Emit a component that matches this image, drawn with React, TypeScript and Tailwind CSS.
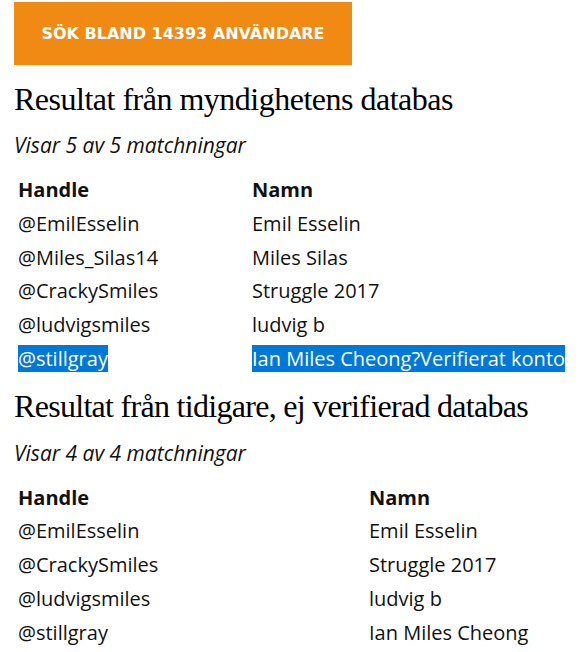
const first = [
  { handle: "@EmilEsselin", name: "Emil Esselin" },
  { handle: "@Miles_Silas14", name: "Miles Silas" },
  { handle: "@CrackySmiles", name: "Struggle 2017" },
  { handle: "@ludvigsmiles", name: "ludvig b" },
  { handle: "@stillgray", name: "Ian Miles Cheong?Verifierat konto", selected: true },
];

const second = [
  { handle: "@EmilEsselin", name: "Emil Esselin" },
  { handle: "@CrackySmiles", name: "Struggle 2017" },
  { handle: "@ludvigsmiles", name: "ludvig b" },
  { handle: "@stillgray", name: "Ian Miles Cheong" },
];

type Row = { handle: string; name: string; selected?: boolean };

function Results({ rows, nameCol }: { rows: Row[]; nameCol: string }) {
  const sel = "bg-[#0078d7] text-white";
  return (
    <div className={`grid ${nameCol} px-1`}>
      <div className="font-bold leading-[33.75px]">Handle</div>
      <div className="font-bold leading-[33.75px]">Namn</div>
      {rows.map((r) => (
        <div key={r.handle} className="contents">
          <div className="leading-[33.75px]">
            <span className={r.selected ? sel : ""}>{r.handle}</span>
          </div>
          <div className="leading-[33.75px] whitespace-nowrap">
            <span className={r.selected ? sel : ""}>{r.name}</span>
          </div>
        </div>
      ))}
    </div>
  );
}

export default function App() {
  return (
    <div className="bg-white text-[#111] font-['Open_Sans',sans-serif] text-[20px] px-[14px] pt-[2px] w-[579px] h-[652px] overflow-hidden">
      <button className="w-[338px] h-[63px] bg-[#f18a12] text-white font-bold text-[16px] font-['DejaVu_Sans',Verdana,sans-serif]">
        SÖK BLAND 14393 ANVÄNDARE
      </button>

      <h2 className="mt-[14px] font-['Liberation_Serif',Georgia,serif] text-[32px] tracking-[-0.5px] leading-[40px] text-black whitespace-nowrap">
        Resultat från myndighetens databas
      </h2>
      <p className="mt-[11px] italic text-[21px] leading-[30px]">Visar 5 av 5 matchningar</p>
      <div className="mt-[13px]">
        <Results rows={first} nameCol="grid-cols-[234px_auto]" />
      </div>

      <h2 className="mt-[10px] font-['Liberation_Serif',Georgia,serif] text-[32px] tracking-[-0.7px] leading-[40px] text-black whitespace-nowrap">
        Resultat från tidigare, ej verifierad databas
      </h2>
      <p className="mt-[12px] italic text-[21px] leading-[30px]">Visar 4 av 4 matchningar</p>
      <div className="mt-[13px]">
        <Results rows={second} nameCol="grid-cols-[351px_auto]" />
      </div>
    </div>
  );
}
